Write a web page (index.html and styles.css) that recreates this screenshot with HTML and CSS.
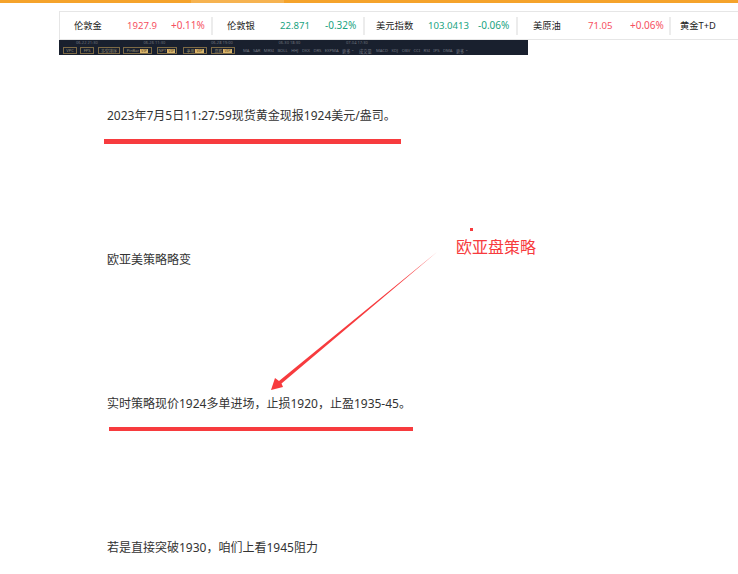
FILE: index.html
```html
<!DOCTYPE html>
<html lang="zh">
<head>
<meta charset="utf-8">
<title>黄金策略</title>
<link rel="stylesheet" href="styles.css">
</head>
<body>
<div class="topbar"><span class="seg-a"></span><span class="seg-b"></span><span class="seg-c"></span></div>
<div class="wrap">
  <div class="ticker">
    <div class="item w1"><span class="name n1">伦敦金</span><span class="val up v1">1927.9</span><span class="pct up">+0.11%</span></div>
    <div class="item w2"><span class="name n2">伦敦银</span><span class="val down v2">22.871</span><span class="pct down">-0.32%</span></div>
    <div class="item w3"><span class="name n3">美元指数</span><span class="val down v3">103.0413</span><span class="pct down">-0.06%</span></div>
    <div class="item w4"><span class="name n4">美原油</span><span class="val up v4">71.05</span><span class="pct up">+0.06%</span></div>
    <div class="item w5"><span class="name n5">黄金T+D</span></div>
  </div>
  <div class="chart">
    <div class="dates"><span>06-22 21:30</span><span>06-26 11:30</span><span>06-28 19:00</span><span>06-30 18:30</span><span>07-04 17:30</span></div>
    <div class="tools">
      <span class="tag t1">VPC</span><span class="tag t2">FPS</span><span class="tag t3">多空排序</span><span class="tag t4">PinBar<b>VIP</b></span><span class="tag t5">NPT<b>VIP</b></span><span class="tag t6">争用<b>VIP</b></span><span class="tag t7">高胜<b>VIP</b></span>
      <span class="inds a">
        <span>MA</span><span>SAR</span><span>MRSI</span><span>BOLL</span><span>HHJ</span><span>DKX</span><span>DRS</span><span>EXPMA</span><span>更多 ⌃</span>
      </span>
      <span class="inds b">
        <span class="vol">成交量</span><span>MACD</span><span>KDJ</span><span>OBV</span><span>CCI</span><span>RSI</span><span>IPS</span><span>DMA</span><span>更多 ⌃</span>
      </span>
    </div>
  </div>
  <article class="article">
    <p class="line l1">2023年7月5日11:27:59现货黄金现报1924美元/盎司。</p>
    <p class="line l2">欧亚美策略略变</p>
    <p class="line l3">实时策略现价1924多单进场，止损1920，止盈1935-45。</p>
    <p class="line l4">若是直接突破1930，咱们上看1945阻力</p>
  </article>
</div>
<svg class="marks" width="738" height="574" viewBox="0 0 738 574" aria-hidden="true">
  <rect x="104" y="139" width="297" height="5" fill="#f73b3e"/>
  <rect x="109" y="427" width="304" height="4" fill="#f73b3e"/>
  <rect x="470" y="228" width="3" height="3" fill="#f73b3e"/>
  <polygon points="437,252 279,381 275,378 271,390 283,387 281.5,383.5" fill="#f73b3e"/>
</svg>
<div class="callout">欧亚盘策略</div>
</body>
</html>
```
FILE: styles.css
```css
* { box-sizing: border-box; }
html, body { margin: 0; padding: 0; }
body {
  width: 738px;
  height: 574px;
  overflow: hidden;
  background: #fff;
  position: relative;
  font-family: "Noto Sans", "Noto Sans CJK SC", "Liberation Sans", sans-serif;
  color: #333;
}
.topbar { display: flex; height: 3px; background: #f5a32b; }
.seg-a { width: 191px; }
.seg-b { width: 93px; background: #f6b350; }
.seg-c { flex: 1; }
.wrap { padding: 8px 0 0 59px; }
.ticker {
  display: flex;
  height: 29px;
  align-items: center;
  border: 1px solid #e6e6e6;
  border-right: 0;
  font-size: 9.3px;
  white-space: nowrap;
}
.item { display: flex; align-items: center; height: 18px; border-right: 2px solid #ececec; flex: none; padding-bottom: 1px; }
.w1 { width: 153px; }
.w2 { width: 152px; }
.w3 { width: 153px; }
.w4 { width: 153px; }
.w5 { width: 60px; border-right: 0; }
.name { color: #222; flex: none; }
.n1 { margin-left: 14px; width: 53px; }
.n2 { margin-left: 14px; width: 53px; }
.n3 { margin-left: 11px; width: 52px; }
.n4 { margin-left: 15px; width: 55px; }
.n5 { margin-left: 9px; }
.val { flex: none; font-size: 9.6px; }
.v1 { width: 44px; }
.v2 { width: 45px; }
.v3 { width: 50px; }
.v4 { width: 42px; }
.pct { flex: none; font-size: 10px; }
.up { color: #f6505f; }
.down { color: #1aa37f; }
.chart {
  width: 469px;
  height: 15px;
  background: #19202e;
  color: #8a8d95;
  overflow: hidden;
}
.dates {
  display: flex;
  height: 7px;
  font-size: 4px;
  line-height: 6px;
  padding-left: 17px;
  gap: 45.5px;
  color: #6f737c;
  white-space: nowrap;
}
.dates span { width: 22px; }
.tools {
  display: flex;
  align-items: center;
  height: 7px;
  padding-left: 4px;
  font-size: 4px;
  white-space: nowrap;
}
.tag {
  display: flex;
  align-items: center;
  justify-content: center;
  gap: 1px;
  height: 7px;
  border: 1px solid #7d6a45;
  color: #9c8f70;
  flex: none;
}
.tag b { background: #d9b56c; color: #5a4520; font-weight: 400; padding: 0 1px; height: 4px; line-height: 4px; }
.t1 { width: 14px; }
.t2 { width: 14px; margin-left: 3px; }
.t3 { width: 22px; margin-left: 4px; }
.t4 { width: 29px; margin-left: 3px; }
.t5 { width: 20px; margin-left: 5px; }
.t6 { width: 24px; margin-left: 6px; }
.t7 { width: 24px; margin-left: 4px; }
.inds { display: flex; gap: 3.4px; color: #747882; font-size: 4.2px; flex: none; }
.a { margin-left: 8px; width: 116px; }
.vol { margin-right: 1px; }
.article { font-size: 12px; color: #333; }
.line { margin: 0; padding-left: 48px; line-height: 18px; white-space: nowrap; }
.l1 { margin-top: 52px; }
.l2 { margin-top: 126px; }
.l3 { margin-top: 126px; }
.l4 { margin-top: 126px; }
.marks { position: absolute; left: 0; top: 0; pointer-events: none; }
.callout {
  position: absolute;
  left: 456px;
  top: 235px;
  font-size: 16px;
  line-height: 24px;
  color: #f73b3e;
  white-space: nowrap;
}
```
